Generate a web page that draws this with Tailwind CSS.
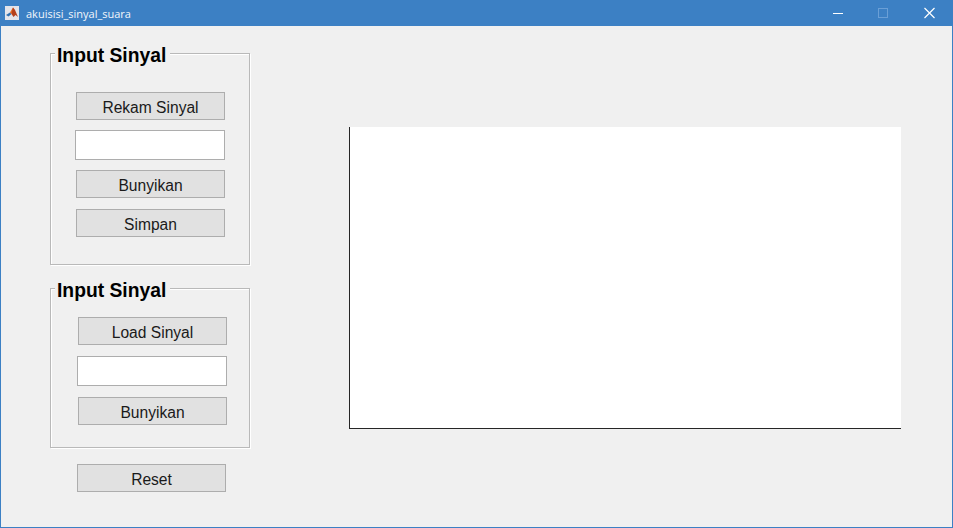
<!DOCTYPE html>
<html lang="en">
<head>
    <meta charset="UTF-8">
    <title>akuisisi_sinyal_suara</title>
    <script src="https://cdn.jsdelivr.net/npm/@tailwindcss/browser@4"></script>
</head>
<body class="w-[953px] h-[528px] overflow-hidden bg-[#3c80c4] font-['Liberation_Sans',sans-serif] text-[15.6px] text-[#1a1a1a]">
    <!-- title bar -->
    <div class="h-[26px] flex items-center pl-[5px] text-white">
        <div class="w-[14px] h-[14px] bg-[#e4e4ea] flex items-center justify-center">
            <svg width="14" height="14" viewBox="0 0 14 14">
                <path d="M1 9 L5 6.5 L6.5 8 L3.5 10.5 Z" fill="#2f6fb0"/>
                <path d="M5 6.5 L8 1.5 L9.5 4 L6.5 8 Z" fill="#e0641f"/>
                <path d="M8 1.5 L10 4 L13 11 L10.5 9 L8.5 11 L6.5 8 Z" fill="#b5401c"/>
            </svg>
        </div>
        <span class="ml-[7px] font-['Open_Sans',sans-serif] text-[11px] leading-none text-[#f2f6fb]">akuisisi_sinyal_suara</span>
        <div class="ml-auto flex items-center">
            <svg width="46" height="26" viewBox="0 0 46 26"><path d="M18 13.5 H28" stroke="#fff" stroke-width="1"/></svg>
            <svg width="46" height="26" viewBox="0 0 46 26"><rect x="17.5" y="8.5" width="9" height="9" fill="none" stroke="#6a9fd6" stroke-width="1"/></svg>
            <svg width="46" height="26" viewBox="0 0 46 26"><path d="M17.5 8 L27.5 18 M27.5 8 L17.5 18" stroke="#fff" stroke-width="1.2"/></svg>
        </div>
    </div>

    <!-- figure -->
    <div class="mx-px h-[501px] bg-[#f0f0f0] flex items-start">
        <div class="ml-[49px] w-[200px] flex flex-col">
            <div class="mt-[27px] h-[212px] border border-[#b9b9b9] shadow-[inset_1px_1px_0_#fff,1px_1px_0_#fff] flex flex-col">
                <div class="-mt-[10px] ml-[4px] w-fit pl-[2px] pr-[4px] bg-[#f0f0f0] text-[19.3px] leading-[24px] font-bold text-black">Input Sinyal</div>
                <button class="mt-[24px] ml-[25px] w-[149px] h-[28px] pt-[3px] bg-[#e1e1e1] border border-[#adadad]">Rekam Sinyal</button>
                <div class="mt-[10px] ml-[24px] w-[150px] h-[30px] bg-white border border-[#adadad]"></div>
                <button class="mt-[10px] ml-[25px] w-[149px] h-[28px] pt-[3px] bg-[#e1e1e1] border border-[#adadad]">Bunyikan</button>
                <button class="mt-[11px] ml-[25px] w-[149px] h-[28px] pt-[3px] bg-[#e1e1e1] border border-[#adadad]">Simpan</button>
            </div>
            <div class="mt-[23px] h-[160px] border border-[#b9b9b9] shadow-[inset_1px_1px_0_#fff,1px_1px_0_#fff] flex flex-col">
                <div class="-mt-[10px] ml-[4px] w-fit pl-[2px] pr-[4px] bg-[#f0f0f0] text-[19.3px] leading-[24px] font-bold text-black">Input Sinyal</div>
                <button class="mt-[14px] ml-[27px] w-[149px] h-[28px] pt-[3px] bg-[#e1e1e1] border border-[#adadad]">Load Sinyal</button>
                <div class="mt-[11px] ml-[26px] w-[150px] h-[30px] bg-white border border-[#adadad]"></div>
                <button class="mt-[11px] ml-[27px] w-[149px] h-[28px] pt-[3px] bg-[#e1e1e1] border border-[#adadad]">Bunyikan</button>
            </div>
            <button class="mt-[16px] ml-[27px] w-[149px] h-[28px] pt-[3px] bg-[#e1e1e1] border border-[#adadad]">Reset</button>
        </div>
        <!-- axes -->
        <div class="ml-[99px] mt-[101px] w-[552px] h-[302px] bg-white border-l border-b border-[#262626]"></div>
    </div>
</body>
</html>
